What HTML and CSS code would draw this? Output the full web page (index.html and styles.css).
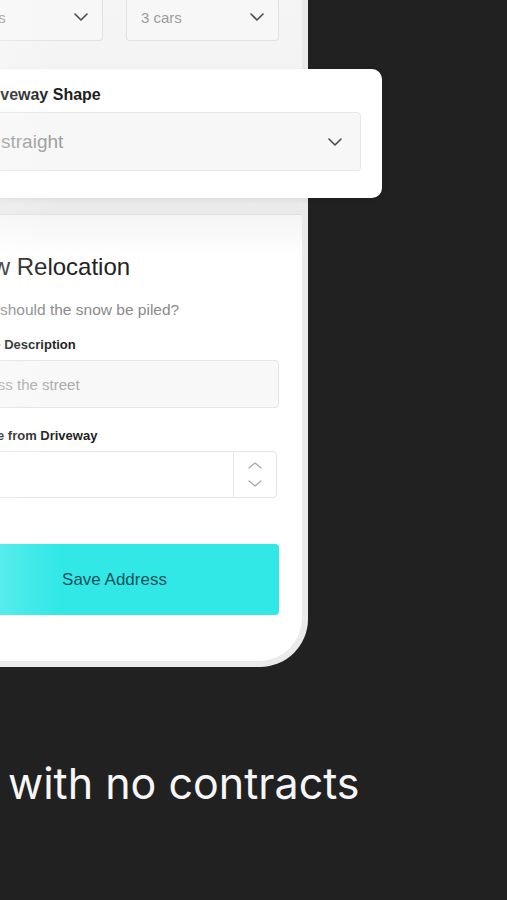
FILE: index.html
```html
<!DOCTYPE html>
<html lang="en">
<head>
    <meta charset="UTF-8">
    <meta name="viewport" content="width=device-width, initial-scale=1.0">
    <title>Save Address</title>
    <link rel="stylesheet" href="styles.css">
</head>
<body>
    <div class="stage">
        <!-- phone mockup, cut off on the left -->
        <div class="phone">
            <div class="screen">
                <div class="sheet-top">
                    <div class="row">
                        <div class="select">
                            <span>2 cars</span>
                            <svg class="chev" width="14" height="8" viewBox="0 0 14 8"><polyline points="1,1 7,7 13,1"/></svg>
                        </div>
                        <div class="select">
                            <span>3 cars</span>
                            <svg class="chev" width="14" height="8" viewBox="0 0 14 8"><polyline points="1,1 7,7 13,1"/></svg>
                        </div>
                    </div>
                </div>

                <div class="form">
                    <h2>Snow Relocation</h2>
                    <p class="hint">Where should the snow be piled?</p>

                    <label for="pile">Pile Site Description</label>
                    <input type="text" id="pile" class="field" placeholder="Across the street">

                    <label for="dist">Distance from Driveway</label>
                    <div class="number">
                        <div class="number-value"></div>
                        <div class="spin">
                            <svg width="14" height="7" viewBox="0 0 14 7"><polyline points="1,6 7,1 13,6"/></svg>
                            <svg width="14" height="7" viewBox="0 0 14 7"><polyline points="1,1 7,6 13,1"/></svg>
                        </div>
                    </div>

                    <button class="save">Save Address</button>
                </div>
            </div>
        </div>

        <!-- zoomed field floating over the phone -->
        <div class="popup">
            <div class="popup-label">Driveway Shape</div>
            <div class="popup-select">
                <span>straight</span>
                <svg class="chev" width="14" height="8" viewBox="0 0 14 8"><polyline points="1,1 7,7 13,1"/></svg>
            </div>
        </div>

        <div class="shine"></div>

        <p class="caption">with no contracts</p>
    </div>
</body>
</html>
```

FILE: styles.css
```css
body {
    margin: 0;
    width: 507px;
    height: 900px;
    overflow: hidden;
    background-color: #212121;
    font-family: "Liberation Sans", Arial, sans-serif;
}

.stage {
    position: relative;
    display: flow-root;
    height: 900px;
}

.phone {
    margin-left: -112px;
    margin-top: -10px;
    width: 414px;
    height: 671px;
    padding: 0 6px 6px 0;
    background-color: #eaeaea;
    border-radius: 0 0 48px 0;
}

.screen {
    height: 671px;
    background-color: #fff;
    border-radius: 0 0 43px 0;
    overflow: hidden;
}

.sheet-top {
    height: 224px;
    background: linear-gradient(to bottom, #f5f5f5, #f2f2f2 180px, #e9e9e9);
    border-bottom: 1px solid #e0e0e0;
}

.row {
    display: flex;
    gap: 23px;
    padding-left: 62px;
}

.select {
    width: 153px;
    height: 51px;
    box-sizing: border-box;
    display: flex;
    align-items: center;
    justify-content: space-between;
    padding: 4px 14px 0 14px;
    background-color: #f7f7f7;
    border: 1px solid #e3e3e3;
    border-top: none;
    border-radius: 0 0 4px 4px;
    font-size: 15px;
    color: #9c9c9c;
}

.chev polyline,
.spin polyline {
    fill: none;
    stroke: #4a4a4a;
    stroke-width: 1.6;
    stroke-linecap: round;
    stroke-linejoin: round;
}

.form {
    display: flex;
    flex-direction: column;
    padding: 37px 23px 0 62px;
    background: linear-gradient(to bottom, #f4f4f4, #fff 40px);
}

.form h2 {
    margin: 0 0 18px;
    font-size: 24px;
    line-height: 30px;
    font-weight: normal;
    color: #222;
}

.hint {
    margin: 0 0 16px;
    font-size: 15.5px;
    line-height: 20px;
    color: #8a8a8a;
}

.form label {
    font-size: 13px;
    line-height: 18px;
    font-weight: bold;
    color: #1e1e1e;
    margin-bottom: 6px;
}

.field {
    height: 48px;
    box-sizing: border-box;
    margin: 0 0 19px;
    padding: 0 16px;
    background-color: #f8f8f8;
    border: 1px solid #e5e5e5;
    border-radius: 4px;
    font-family: inherit;
    font-size: 15px;
}

.field::placeholder {
    color: #ababab;
}

.number {
    display: flex;
    height: 47px;
    margin-right: 2px;
    box-sizing: border-box;
    border: 1px solid #e5e5e5;
    border-radius: 4px;
    background-color: #fff;
}

.number-value {
    flex: 1;
}

.spin {
    width: 42px;
    border-left: 1px solid #e8e8e8;
    display: flex;
    flex-direction: column;
    align-items: center;
    justify-content: center;
    gap: 11px;
}

.spin polyline {
    stroke: #a8a8a8;
    stroke-width: 1.3;
}

.save {
    margin-top: 46px;
    height: 71px;
    border: none;
    border-radius: 4px;
    background-color: #31e8e7;
    color: #1d5155;
    font-family: inherit;
    font-size: 17px;
}

.popup {
    position: absolute;
    left: -43px;
    top: 69px;
    width: 425px;
    height: 129px;
    box-sizing: border-box;
    padding: 17px 21px 0 21px;
    background-color: #fff;
    border-radius: 10px;
    box-shadow: 0 2px 6px rgba(0, 0, 0, 0.08);
}

.popup-label {
    font-size: 16px;
    line-height: 18px;
    font-weight: bold;
    color: #1e1e1e;
    margin-bottom: 8px;
}

.popup-select {
    height: 59px;
    box-sizing: border-box;
    display: flex;
    align-items: center;
    justify-content: space-between;
    padding: 0 18px 0 22px;
    background-color: #f7f7f7;
    border: 1px solid #e6e6e6;
    border-radius: 4px;
    font-size: 19px;
    color: #9e9e9e;
}

.shine {
    position: absolute;
    left: 0;
    top: 0;
    width: 60px;
    height: 660px;
    background: linear-gradient(to right, rgba(255, 255, 255, 0.18), rgba(255, 255, 255, 0));
    pointer-events: none;
}

.caption {
    margin: 92px 0 0;
    padding-left: 8px;
    font-family: Inter, "Liberation Sans", sans-serif;
    font-size: 43px;
    line-height: 48px;
    color: #f6f6f6;
    white-space: nowrap;
}
```
